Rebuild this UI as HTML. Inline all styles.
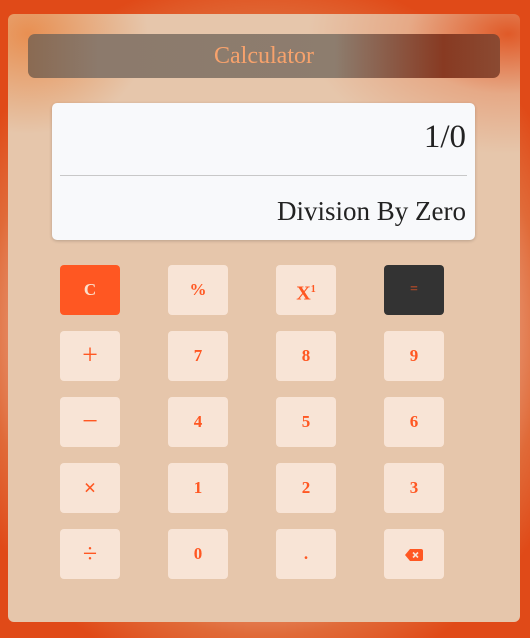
<!DOCTYPE html>
<html><head><style>
html,body{margin:0;padding:0;width:530px;height:638px;overflow:hidden}
body{position:relative;font-family:"Liberation Serif",serif;
background:radial-gradient(ellipse 330px 360px at 265px 330px,#eec0a8 0%,#e8a080 70%,#e06a38 85%,#e04a18 100%);}
.panel{position:absolute;left:8px;top:14px;width:512px;height:608px;border-radius:6px;
background:radial-gradient(ellipse 200px 120px at 500px 20px,#e05a28 0%,rgba(230,150,110,.6) 50%,rgba(230,198,171,0) 100%),
radial-gradient(ellipse 120px 100px at 20px 20px,rgba(232,130,60,.8),rgba(230,198,171,0)),#e6c6ab;}
.title{position:absolute;left:28px;top:34px;width:472px;height:44px;border-radius:7px;
background:linear-gradient(90deg,#8a6a52 0%,#8c7a6c 15%,#8d7d6e 65%,#883a22 88%,#8a4a32 100%);
color:#f7a26c;text-align:center;line-height:44px;font-size:24px;}
.disp{position:absolute;left:52px;top:103px;width:423px;height:137px;background:#f8f9fb;border-radius:5px;box-shadow:0 1px 3px rgba(0,0,0,.2);}
.e{position:absolute;right:9px;top:16px;font-size:33px;color:#222}
.hr{position:absolute;left:8px;right:8px;top:72px;border-top:1px solid #c8c8c8}
.r{position:absolute;right:9px;top:93px;font-size:27px;color:#222}
.b{position:absolute;width:60px;height:50px;border-radius:4px;background:#f8e4d6;color:#ff5722;
font-weight:bold;font-size:17px;text-align:center;line-height:50px}
</style></head><body>
<div class="panel"></div>
<div class="title">Calculator</div>
<div class="disp"><div class="e">1/0</div><div class="hr"></div><div class="r">Division By Zero</div></div>
<div class="b" style="left:60px;top:265px;background:#ff5722;color:#fbe0cc">C</div>
<div class="b" style="left:168px;top:265px">%</div>
<div class="b" style="left:276px;top:265px;font-size:20px">X<sup style="font-size:10px">1</sup></div>
<div class="b" style="left:384px;top:265px;background:#333;font-weight:normal;font-size:14px">=</div>
<div class="b" style="left:60px;top:331px;font-size:28px;font-weight:normal">+</div>
<div class="b" style="left:168px;top:331px">7</div>
<div class="b" style="left:276px;top:331px">8</div>
<div class="b" style="left:384px;top:331px">9</div>
<div class="b" style="left:60px;top:397px;font-size:28px;font-weight:normal">−</div>
<div class="b" style="left:168px;top:397px">4</div>
<div class="b" style="left:276px;top:397px">5</div>
<div class="b" style="left:384px;top:397px">6</div>
<div class="b" style="left:60px;top:463px;font-size:22px">×</div>
<div class="b" style="left:168px;top:463px">1</div>
<div class="b" style="left:276px;top:463px">2</div>
<div class="b" style="left:384px;top:463px">3</div>
<div class="b" style="left:60px;top:529px;font-size:26px;font-weight:normal">÷</div>
<div class="b" style="left:168px;top:529px">0</div>
<div class="b" style="left:276px;top:529px">.</div>
<div class="b" style="left:384px;top:529px"><svg width="18" height="12" viewBox="0 0 18 12" style="vertical-align:middle"><path d="M5 0H16a2 2 0 0 1 2 2V10a2 2 0 0 1-2 2H5L0 6Z" fill="#ff5722"/><path d="M8 3.5l5 5M13 3.5l-5 5" stroke="#f8e4d6" stroke-width="1.6"/></svg></div>
</body></html>
